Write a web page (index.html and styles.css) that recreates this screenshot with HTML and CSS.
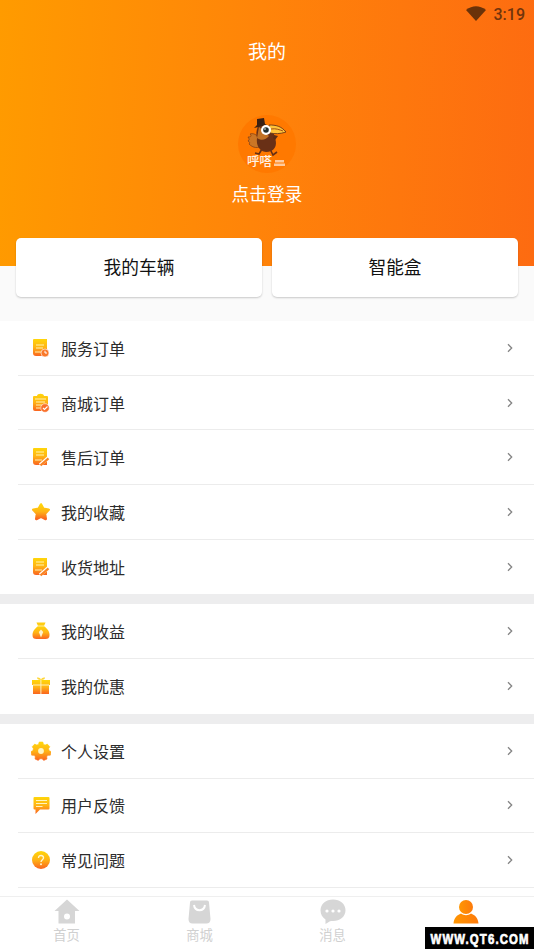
FILE: index.html
```html
<!DOCTYPE html>
<html lang="zh-CN">
<head>
<meta charset="utf-8">
<title>我的</title>
<link rel="stylesheet" href="styles.css">
</head>
<body>
<svg class="defs" aria-hidden="true">
  <defs>
    <linearGradient id="warm" x1="0" y1="0" x2="0" y2="1"><stop offset="0" stop-color="#ffd60a"/><stop offset=".5" stop-color="#ffb315"/><stop offset="1" stop-color="#fa6420"/></linearGradient>
    <linearGradient id="user" x1="0" y1="0" x2="1" y2="0"><stop offset="0" stop-color="#ff9602"/><stop offset="1" stop-color="#fd7a0b"/></linearGradient>
    <symbol id="chevron" viewBox="0 0 6 10"><path d="M1 1.2 4.7 5 1 8.8" fill="none" stroke="#858585" stroke-width="1.3"/></symbol>
    <symbol id="service" viewBox="0 0 20 20"><path d="M3 1h13v17H5a3 3 0 0 1-3-3V2a1 1 0 0 1 1-1Z" fill="url(#warm)"/><path d="M5 7h8M5 10h7M4 14h6" stroke="#fff3b0" stroke-width="1"/><circle cx="14" cy="15" r="4" fill="#f9792b" stroke="#fff" stroke-width=".6"/><path d="M14 12.8V15h2" fill="none" stroke="#fff" stroke-width="1"/></symbol>
    <symbol id="order" viewBox="0 0 20 20"><path d="M3 3h3c0-3 7-3 7 0h3a1 1 0 0 1 1 1v14H4a2 2 0 0 1-2-2V4a1 1 0 0 1 1-1Z" fill="url(#warm)"/><path d="M4 6h11M5 9h9M5 12h6M5 15h4" stroke="#fff3b0" stroke-width="1"/><circle cx="14" cy="15" r="4.3" fill="#f9702b" stroke="#fff" stroke-width=".6"/><path d="m12 15 1.5 1.5 3-3" fill="none" stroke="#fff" stroke-width="1.1"/></symbol>
    <symbol id="edit" viewBox="0 0 20 20"><path d="M3 1h13v17H5a3 3 0 0 1-3-3V2a1 1 0 0 1 1-1Z" fill="url(#warm)"/><path d="M5 5h8M5 8h8M4 13h7" stroke="#fff3b0" stroke-width="1.1"/><path d="m9 18 8-7" stroke="#fff" stroke-width="3.600"/><path d="m9.500 18.300 8-7" stroke="#f98525" stroke-width="2.200"/></symbol>
    <symbol id="star" viewBox="0 0 20 20"><path d="m10 2.500 2.300 4.400 5.400.8-3.700 4 .7 5.300-4.700-2.300-4.700 2.300.7-5.300-3.700-4 5.400-.8Z" fill="url(#warm)" stroke="url(#warm)" stroke-width="2.600" stroke-linejoin="round"/></symbol>
    <symbol id="bag" viewBox="0 0 20 20"><path d="M5.500 1.500h9L13 5h-6Z" fill="#ffcd12"/><path d="M7 5h6c3 2.500 5.500 5 5.500 9 0 3-1.500 4-4 4h-9c-2.500 0-4-1-4-4C1.500 10 4 7.500 7 5Z" fill="url(#warm)"/><path d="M6.500 5h7" stroke="#fff" stroke-width=".6"/><path d="m10 8.500 2.200 2.500-2.200 5.500L7.800 11Z" fill="#fff3cf"/></symbol>
    <symbol id="gift" viewBox="0 0 20 20"><path d="M10 4C7 4 6 3 6 1.500c2-.5 4 .8 4 2.500 0-1.700 2-3 4-2.500C14 3 13 4 10 4Z" fill="#ffd633"/><path d="M1 4h18v5h-1v9H2V9H1Z" fill="url(#warm)"/><path d="M2 9h16M9.900 4v14" stroke="#fff1bd" stroke-width="1"/></symbol>
    <symbol id="gear" viewBox="0 0 20 20"><path d="m7.600 3.200.6-2.200h3.600l.6 2.200 1.700.9 2.200-1 2.500 2.600-1.200 2 .6 2 2 1-.9 3.500-2.400.1-1.200 1.500.3 2.200-3.300 1.400-1.600-1.600h-2.200l-1.600 1.600-3.300-1.400.3-2.200-1.200-1.500-2.400-.1L-.2 10.700l2-1 .6-2-1.200-2 2.500-2.600 2.200 1Z" fill="url(#warm)" stroke="url(#warm)" stroke-width=".6" stroke-linejoin="round"/><circle cx="10" cy="10" r="2.900" fill="#fff6c4"/></symbol>
    <symbol id="feedback" viewBox="0 0 20 20"><path d="M3.500 2h14a1 1 0 0 1 1 1v10.500a1 1 0 0 1-1 1H9L4.500 19v-4.500h-1a1 1 0 0 1-1-1V3a1 1 0 0 1 1-1Z" fill="url(#warm)"/><path d="M5 5.500h11M5 8.500h11M5 11.500h6.500" stroke="#fff3c0" stroke-width="1.100"/></symbol>
    <symbol id="help" viewBox="0 0 20 20"><circle cx="10" cy="10" r="9" fill="url(#warm)"/><path d="M7.500 8c0-3.500 5.200-3.300 5 0-.1 1.700-2.500 1.800-2.500 4" fill="none" stroke="#fff6d2" stroke-width="1.400"/><circle cx="10" cy="14.300" r="1" fill="#fff6d2"/></symbol>
  </defs>
</svg>
<main class="screen">
  <header class="hero">
    <div class="status">
      <svg class="wifi" viewBox="0 0 20 15"><path d="M0 4Q10-3.500 20 4L10 15Z" fill="#6a3209"/></svg>
      <span>3:19</span>
    </div>
    <h1 class="title">我的</h1>
    <svg class="avatar" viewBox="0 0 60 60">
      <circle cx="30" cy="30" r="29" fill="#ff7900"/>
      <path d="M25 35 22 40 18 39M33 35 36 41 40 38" fill="none" stroke="#653016" stroke-width="1.600"/>
      <path d="M22 23c-4-3-6-4-9-3 2 2 1 3-2 3 1 2 2 2 0 4 2 1 2 2 1 3 4 4 9 5 14 1Z" fill="#cc7625" stroke="#7c3c17" stroke-width=".7"/>
      <path d="M21 12c-2 5-2 8-1 12-1 7 2 13 9 14 8 0 12-6 9-14l-3-11Z" fill="#693016"/>
      <path d="m22 13-2 11c4 3 9 2 12-2Z" fill="#c27124"/>
      <path d="M32 11c7 0 12 1 17 7-6 2-11 2-16 1Z" fill="#ffc33a" stroke="#5c2c14" stroke-width=".8"/>
      <path d="M34 15c5-1 9 1 12 2" fill="none" stroke="#a25018"/>
      <path d="m36 24 1-3 4 1-3 4Z" fill="#5c2c14"/>
      <path d="m20 5 7-1 1 6 2 1-13 3 3-3Z" fill="#3b2114"/>
      <circle cx="29" cy="16" r="5" fill="#fff"/><circle cx="29" cy="16" r="2.800" fill="#233030"/><circle cx="28" cy="15" r=".8" fill="#fff"/>
      <text class="brand" x="10" y="52" textLength="25" lengthAdjust="spacingAndGlyphs">呼嗒</text>
      <g fill="#ffe7d0" opacity=".75"><rect x="38" y="46" width="9" height="2.500"/><rect x="37" y="49.500" width="11" height="2.500"/></g>
    </svg>
    <div class="login">点击登录</div>
  </header>
  <section class="cards"><div class="card">我的车辆</div><div class="card">智能盒</div></section>
  <section class="group">
    <div class="row"><svg class="icon"><use href="#service"/></svg><span>服务订单</span><svg class="arrow"><use href="#chevron"/></svg></div>
    <div class="row"><svg class="icon"><use href="#order"/></svg><span>商城订单</span><svg class="arrow"><use href="#chevron"/></svg></div>
    <div class="row"><svg class="icon"><use href="#edit"/></svg><span>售后订单</span><svg class="arrow"><use href="#chevron"/></svg></div>
    <div class="row"><svg class="icon"><use href="#star"/></svg><span>我的收藏</span><svg class="arrow"><use href="#chevron"/></svg></div>
    <div class="row"><svg class="icon"><use href="#edit"/></svg><span>收货地址</span><svg class="arrow"><use href="#chevron"/></svg></div>
  </section>
  <section class="group">
    <div class="row"><svg class="icon"><use href="#bag"/></svg><span>我的收益</span><svg class="arrow"><use href="#chevron"/></svg></div>
    <div class="row"><svg class="icon"><use href="#gift"/></svg><span>我的优惠</span><svg class="arrow"><use href="#chevron"/></svg></div>
  </section>
  <section class="group last">
    <div class="row"><svg class="icon"><use href="#gear"/></svg><span>个人设置</span><svg class="arrow"><use href="#chevron"/></svg></div>
    <div class="row"><svg class="icon"><use href="#feedback"/></svg><span>用户反馈</span><svg class="arrow"><use href="#chevron"/></svg></div>
    <div class="row"><svg class="icon"><use href="#help"/></svg><span>常见问题</span><svg class="arrow"><use href="#chevron"/></svg></div>
  </section>
  <nav class="tabs">
    <div class="tab"><svg viewBox="0 0 26 26"><path fill-rule="evenodd" d="M13 .5 25.500 12H21v12.500H4.500V12H.5ZM13 14.500a3 3 0 1 0 0 6 3 3 0 0 0 0-6Z"/></svg><span>首页</span></div>
    <div class="tab"><svg viewBox="0 0 26 26"><path d="M5 1.500h15a2 2 0 0 1 2 2L23.500 20c0 3-1.500 4.500-4 4.500h-14c-2.500 0-4-1.500-4-4.500L3 3.500a2 2 0 0 1 2-2Z"/><path class="smile" d="M7 6c1 7 10 7 11 0"/></svg><span>商城</span></div>
    <div class="tab"><svg viewBox="0 0 26 26"><path d="M13 .5c7 0 12.500 4.500 12.500 10.800S20 22 13 22c-1 0-2 0-3 .2L5.500 25v-4.500C2.500 18.500.5 15.500.5 11.300.5 5 6 .5 13 .5Z"/><g fill="#fff"><circle cx="7" cy="12" r="1.600"/><circle cx="13" cy="12" r="1.600"/><circle cx="19" cy="12" r="1.600"/></g></svg><span>消息</span></div>
    <div class="tab active"><svg viewBox="0 0 26 26"><circle cx="13" cy="8" r="7"/><path d="M.5 24.500C1 19 4 16 8 14.500c3 2.300 7 2.300 10 0 4 1.500 7 4.500 7.500 10Z"/></svg></div>
  </nav>
  <div class="watermark"><svg viewBox="0 0 109 22"><text transform="translate(5.500 17) scale(.76 1)">WWW.QT6.COM</text></svg></div>
</main>
</body>
</html>
```
FILE: styles.css
```css
* { box-sizing: border-box; }
body { margin: 0; font-family: "Noto Sans CJK SC", sans-serif; background: #fff; }
.defs { position: absolute; width: 0; height: 0; }
.screen { position: relative; display: flex; flex-direction: column; width: 534px; height: 949px; overflow: hidden; background: linear-gradient(#fafafa 321px, #fff 321px); }
.hero { display: flex; flex: none; flex-direction: column; align-items: center; height: 266px; background: linear-gradient(93deg, #ff9b00, #ff8409 48%, #fd6b11); color: #fff; }
.status { display: flex; align-self: stretch; justify-content: flex-end; align-items: center; gap: 8px; height: 28px; padding: 1px 9px 0 0; font: 500 16px/27px Roboto, sans-serif; color: #71340c; }
.wifi { width: 20px; height: 15px; margin-top: -2px; }
.title { margin: 9px 0 0; font-size: 19px; line-height: 28px; font-weight: 400; }
.avatar { width: 60px; height: 60px; margin-top: 49px; }
.brand { font-size: 12px; font-weight: 500; fill: #fff2e5; }
.login { margin-top: 5px; font-size: 17.700px; line-height: 28px; }
.cards { display: flex; flex: none; gap: 10px; height: 83px; margin-top: -28px; padding: 0 16px 24px; }
.card { display: flex; flex: 1; align-items: center; justify-content: center; height: 59px; padding-bottom: 3px; border-radius: 5px; background: #fff; box-shadow: 0 1px 2px #0003; font-size: 17.700px; color: #111; }
.group { flex: none; padding-left: 18px; background: #fff; border-bottom: 10px solid #ededee; }
.group.last { border-bottom: 0; }
.row { display: flex; align-items: center; height: 54.700px; padding: 0 21px 0 13px; border-bottom: 1px solid #ececec; font-size: 16px; color: #2c2c2c; }
.group:not(.last) .row:last-child { border-bottom: 0; }
.icon { width: 20px; height: 20px; margin-right: 10px; }
.arrow { width: 6px; height: 10px; margin-left: auto; }
.tabs { display: flex; flex: none; height: 53px; margin-top: auto; border-top: 1px solid #efefef; background: #fff; color: #d0d0d0; fill: #d6d6d6; font-size: 13.300px; padding-right: 2px; }
.tab { display: flex; flex: 1; flex-direction: column; align-items: center; padding-top: 2px; line-height: 20px; }
.tab svg { width: 26px; height: 26px; }
.smile { fill: none; stroke: #fff; stroke-width: 2; }
.active { fill: url(#user); }
.watermark { position: absolute; right: 0; bottom: 0; width: 109px; height: 22px; background: #000; }
.watermark svg { display: block; width: 109px; height: 22px; }
.watermark text { fill: #fff; stroke: #fff; stroke-width: .7px; font: 700 15px "Liberation Sans", sans-serif; letter-spacing: 1.500px; }
```
